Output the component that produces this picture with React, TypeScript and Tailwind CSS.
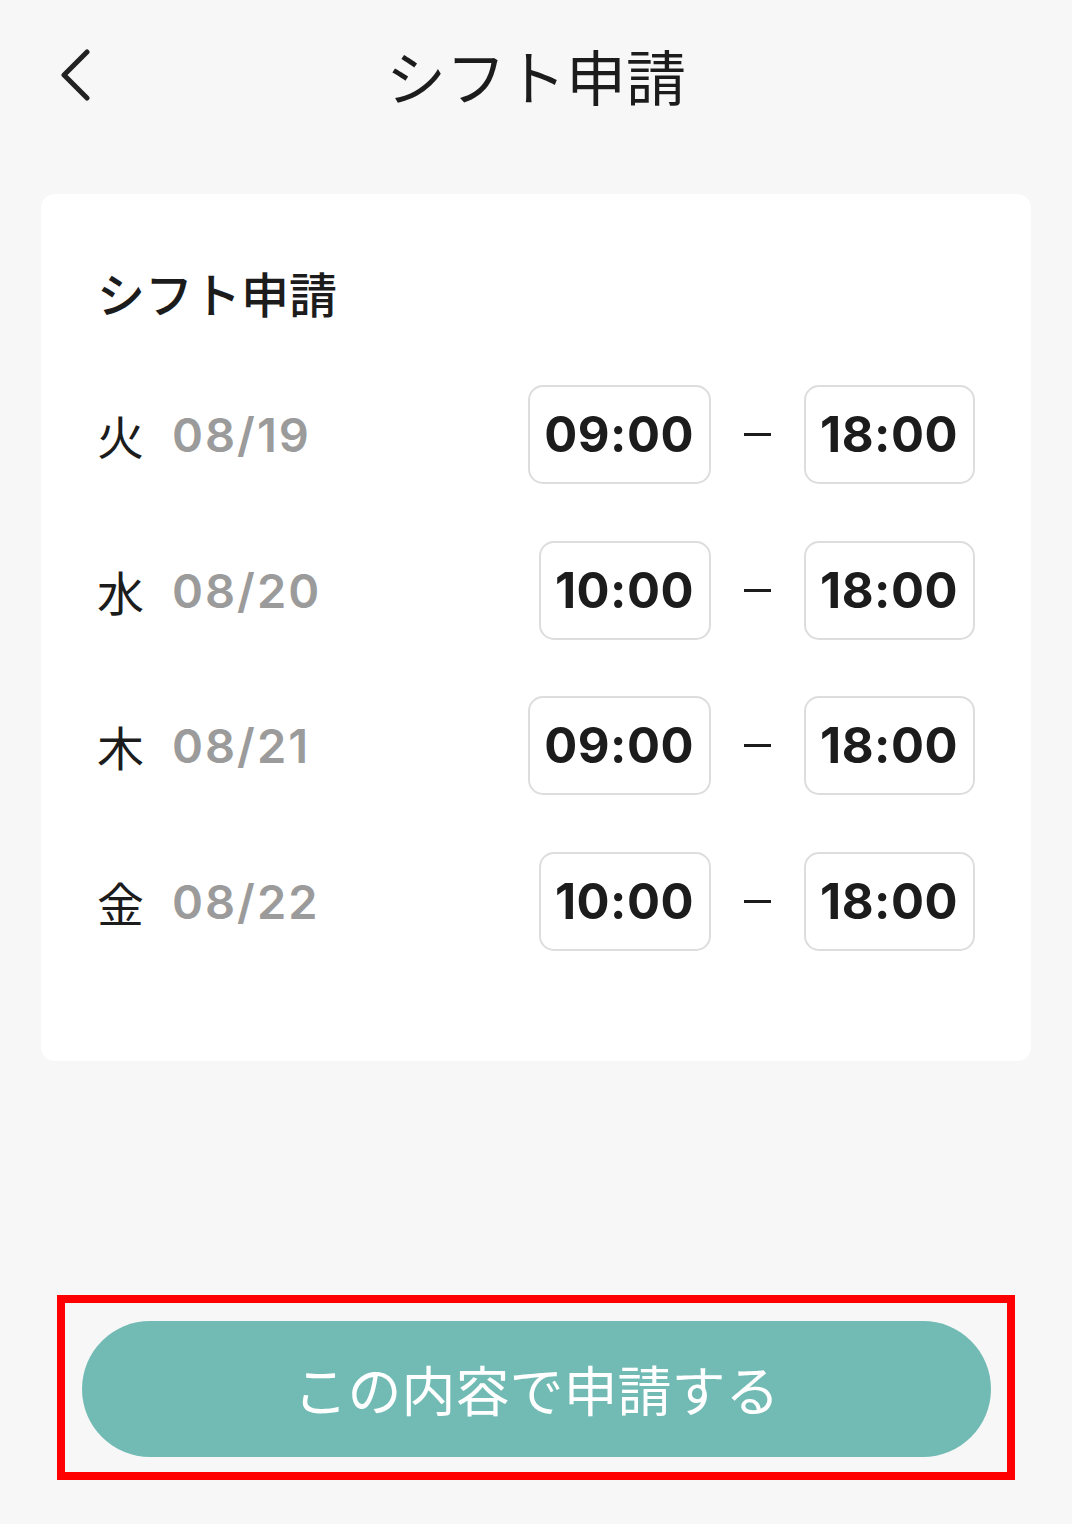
import React from 'react';

interface ShiftRow {
  day: string;
  date: string;
  start: string;
  end: string;
}

const rows: ShiftRow[] = [
  { day: '火', date: '08/19', start: '09:00', end: '18:00' },
  { day: '水', date: '08/20', start: '10:00', end: '18:00' },
  { day: '木', date: '08/21', start: '09:00', end: '18:00' },
  { day: '金', date: '08/22', start: '10:00', end: '18:00' },
];

const jp = { fontFamily: '"Noto Sans CJK JP", sans-serif' };
const num = { fontFamily: 'Inter, "Noto Sans CJK JP", sans-serif' };

const TimeBox: React.FC<{ value: string }> = ({ value }) => (
  <div
    className="h-[99px] pl-[14px] pr-[15px] flex items-center rounded-[15px] border-2 border-[#dddddd] bg-white text-[49px] font-bold leading-none tracking-[0.5px] text-[#1c1c1c]"
    style={num}
  >
    {value}
  </div>
);

const App: React.FC = () => {
  return (
    <div className="min-h-[1524px] w-full bg-[#f7f7f7] flex flex-col" style={jp}>
      <header className="h-[150px] flex items-center px-[60px]">
        <button className="w-[36px] h-[56px] flex items-center justify-start">
          <svg width="32" height="52" viewBox="0 0 32 52" fill="none">
            <path
              d="M27 3 L4 26 L27 49"
              stroke="#222222"
              strokeWidth="5"
              strokeLinecap="round"
              strokeLinejoin="round"
            />
          </svg>
        </button>
        <h1 className="flex-1 text-center text-[60px] leading-none text-[#1c1c1c] pr-[36px]">シフト申請</h1>
      </header>

      <section className="mx-[41px] mt-[44px] bg-white rounded-[14px] px-[56px] pt-[74px] pb-[110px]">
        <h2 className="text-[48px] leading-none text-[#1c1c1c] font-medium">シフト申請</h2>
        <div className="mt-[69px] flex flex-col gap-[56.5px]">
          {rows.map((row) => (
            <div key={row.date} className="flex items-center justify-between h-[99px]">
              <div className="flex items-center">
                <span className="text-[47px] leading-none text-[#1c1c1c]">{row.day}</span>
                <span
                  className="ml-[28px] text-[47px] leading-none font-semibold tracking-[2px] text-[#9b9b9b]"
                  style={num}
                >
                  {row.date}
                </span>
              </div>
              <div className="flex items-center gap-[33px]">
                <TimeBox value={row.start} />
                <div className="w-[27px] h-[3px] bg-[#1c1c1c]" />
                <TimeBox value={row.end} />
              </div>
            </div>
          ))}
        </div>
      </section>

      <div className="mt-[234px] mx-[57px] border-[8px] border-[#ff0000] pt-[18px] pb-[15px] pl-[17px] pr-[16px]">
        <button className="w-full h-[136px] rounded-full bg-[#72bbb4] text-white text-[54px] leading-none flex items-center justify-center">
          この内容で申請する
        </button>
      </div>
    </div>
  );
};

export default App;
